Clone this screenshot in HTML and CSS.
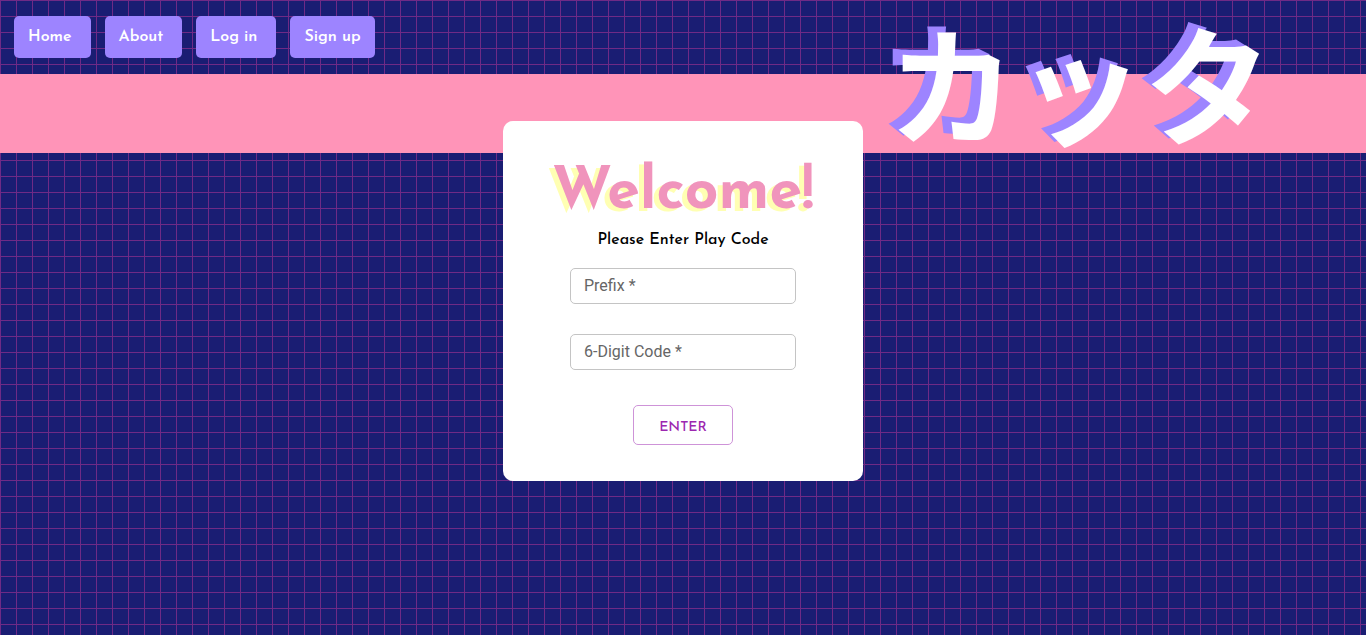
FILE: index.html
```html
<!DOCTYPE html>
<html lang="en">
<head>
  <meta charset="utf-8">
  <meta name="viewport" content="width=device-width, initial-scale=1">
  <title>カッタ</title>
  <link rel="stylesheet" href="styles.css">
</head>
<body>
  <header class="header">
    <nav class="nav">
      <a class="nav-link" href="#home">Home</a>
      <a class="nav-link" href="#about">About</a>
      <a class="nav-link" href="#login">Log in</a>
      <a class="nav-link nav-link-last" href="#signup">Sign up</a>
    </nav>
  </header>
  <div class="band"></div>
  <div class="logo" lang="ja">カッタ</div>
  <main class="main">
    <form class="card">
      <h1 class="title">Welcome!</h1>
      <p class="subtitle">Please Enter Play Code</p>
      <div class="field">
        <input class="field-input" id="prefix" type="text" required>
        <label class="field-label" for="prefix">Prefix *</label>
      </div>
      <div class="field">
        <input class="field-input" id="code" type="text" required>
        <label class="field-label" for="code">6-Digit Code *</label>
      </div>
      <button class="enter" type="submit">ENTER</button>
    </form>
  </main>
</body>
</html>
```
FILE: styles.css
```css
* {
  box-sizing: border-box;
}

body {
  margin: 0;
  min-height: 100vh;
  background-color: #1a1d73;
  background-image:
    linear-gradient(#6f2a86 1px, transparent 1px),
    linear-gradient(90deg, #6f2a86 1px, transparent 1px);
  background-size: 16px 16px;
  font-family: "Josefin Sans", Lato, sans-serif;
}

.header {
  padding: 16px 14px;
}

.nav {
  display: flex;
  gap: 14px;
}

.nav-link {
  padding: 9px 19px 9px 14px;
  border-radius: 5px;
  background: #9d84ff;
  color: #fff;
  font-size: 16px;
  font-weight: 600;
  line-height: 24px;
  text-decoration: none;
}

.nav-link-last {
  padding-right: 14px;
}

.logo {
  position: absolute;
  top: 1px;
  right: 94px;
  color: #fff;
  font-family: "Noto Sans CJK JP", sans-serif;
  font-size: 128px;
  font-weight: 700;
  line-height: 160px;
  text-shadow: -10px -6px 0 #9d84ff;
}

.band {
  height: 79px;
  background: #ff94b8;
}

.main {
  display: flex;
  justify-content: center;
  margin-top: -32px;
}

.card {
  position: relative;
  display: flex;
  flex-direction: column;
  align-items: center;
  width: 360px;
  padding: 37px 32px 36px;
  border-radius: 10px;
  background: #fff;
}

.title {
  margin: 0;
  color: #f094bc;
  font-size: 59px;
  font-weight: 700;
  line-height: 72px;
  text-shadow: -5px 3px 0 #ffffb3;
}

.subtitle {
  margin: 0 0 18px;
  color: #000;
  font-size: 16px;
  font-weight: 500;
  line-height: 20px;
}

.field {
  position: relative;
  width: 226px;
  margin-bottom: 30px;
}

.field-input {
  display: block;
  width: 100%;
  height: 36px;
  padding: 0 13px;
  border: 1px solid #c4c4c4;
  border-radius: 5px;
  background: #fff;
  font: 16px Roboto, sans-serif;
}

.field-label {
  position: absolute;
  top: 6px;
  left: 14px;
  color: #666;
  font-family: Roboto, sans-serif;
  font-size: 16px;
  line-height: 24px;
}

.field-input:focus + .field-label,
.field-input:valid + .field-label {
  top: -12px;
  padding: 0 4px;
  background: #fff;
  font-size: 12px;
}

.enter {
  width: 100px;
  height: 40px;
  margin-top: 5px;
  padding: 4px 0 0;
  border: 1px solid #ce93d8;
  border-radius: 5px;
  background: #fff;
  color: #9c27b0;
  font-family: inherit;
  font-size: 14px;
  font-weight: 500;
}
```
